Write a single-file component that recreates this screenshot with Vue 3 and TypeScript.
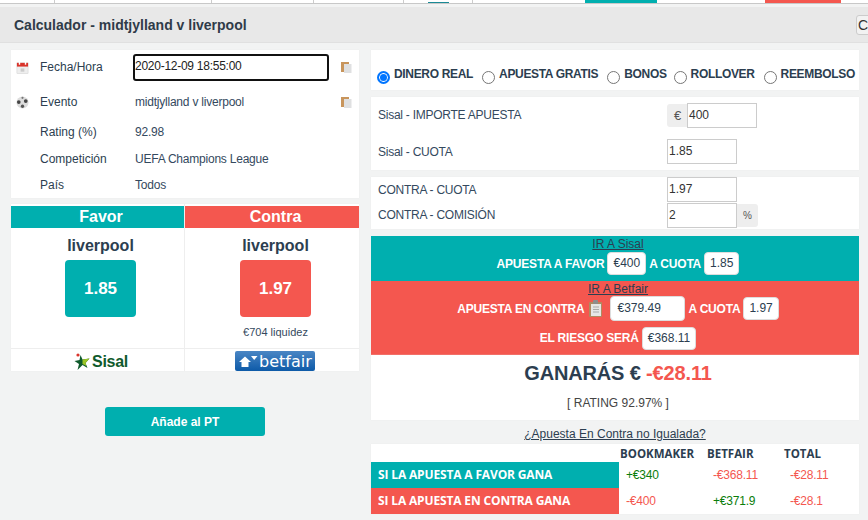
<script setup lang="ts">
const stripCells = [
  { w: 55, cls: 'tick' }, { w: 157, cls: 'tick' }, { w: 102, cls: 'tick' }, { w: 90, cls: 'tick' },
  { w: 24, cls: '' }, { w: 21, cls: 'dark' }, { w: 24, cls: 'tick' }, { w: 112, cls: '' },
  { w: 72, cls: 'teal' }, { w: 108, cls: '' }, { w: 76, cls: 'red' }
]
const infoRows = [
  { label: 'Rating (%)', value: '92.98' },
  { label: 'Competición', value: 'UEFA Champions League' },
  { label: 'País', value: 'Todos' }
]
const modes = ['DINERO REAL', 'APUESTA GRATIS', 'BONOS', 'ROLLOVER', 'REEMBOLSO']
</script>

<template>
  <div class="page">
    <div class="strip">
      <span class="cell" v-for="(c, i) in stripCells" :key="i" :class="c.cls" :style="{ width: c.w + 'px' }"></span>
    </div>
    <header class="head">
      <h1>Calculador - midtjylland v liverpool</h1>
      <button class="closeb">C</button>
    </header>
    <div class="cols">
      <div class="left">
        <section class="card info">
          <div class="irow r1">
            <svg class="ic" viewBox="0 0 14 14"><rect x="1" y="2" width="12" height="11.5" fill="#eee" stroke="#ccc" stroke-width=".5"/><rect x="1" y="2" width="12" height="4" fill="#d9342b"/><rect x="3" y="1" width="1.5" height="3" fill="#fff"/><rect x="9.5" y="1" width="1.5" height="3" fill="#fff"/><rect x="5" y="8" width="4" height="3.5" fill="#ccc"/></svg>
            <span class="lab">Fecha/Hora</span>
            <span class="datebox">2020-12-09 18:55:00</span>
            <svg class="cp" viewBox="0 0 11 11"><rect x="0" y="0" width="8" height="10" fill="#c8955c"/><rect x="3" y="2" width="7.5" height="9" fill="#dfe0e1"/></svg>
          </div>
          <div class="irow r2">
            <svg class="ic" viewBox="0 0 14 14"><circle cx="7" cy="7" r="6.5" fill="#dcdcdc"/><circle cx="3" cy="6.5" r="2" fill="#444"/><circle cx="10.5" cy="5.5" r="2" fill="#444"/><circle cx="7" cy="11" r="1.8" fill="#555"/><circle cx="7" cy="2" r="1.2" fill="#777"/></svg>
            <span class="lab">Evento</span>
            <span class="val ev">midtjylland v liverpool</span>
            <svg class="cp" viewBox="0 0 11 11"><rect x="0" y="0" width="8" height="10" fill="#c8955c"/><rect x="3" y="2" width="7.5" height="9" fill="#dfe0e1"/></svg>
          </div>
          <div class="irow plain" v-for="r in infoRows" :key="r.label">
            <span class="ic-sp"></span>
            <span class="lab">{{ r.label }}</span>
            <span class="val">{{ r.value }}</span>
          </div>
        </section>

        <section class="card sides">
          <div class="side sfav">
            <div class="side-h teal">Favor</div>
            <div class="side-b">
              <div class="team">liverpool</div>
              <div class="oddbox teal">1.85</div>
            </div>
            <div class="logo">
              <svg width="18" height="18" viewBox="0 0 17 18"><circle cx="3.5" cy="2" r="1.6" fill="#d9342b"/><path d="M6 2 L8 6.5 L15 5.5 L11 10 L13 15 L8 12 L3 17 L4.5 11 L0 8 L5 7 Z" fill="#0f5a2c"/><path d="M8 6.5 L15 5.5 L11 10 L12 13 L8 11 Z" fill="#9cc526"/></svg>
              <span class="sisal">Sisal</span>
            </div>
          </div>
          <div class="side scon">
            <div class="side-h red">Contra</div>
            <div class="side-b">
              <div class="team">liverpool</div>
              <div class="oddbox red">1.97</div>
              <div class="liq">€704 liquidez</div>
            </div>
            <div class="logo">
              <div class="betfair">
                <svg width="19" height="11" viewBox="0 0 19 11"><path d="M0 6 L6 .5 L12 6 H9.5 V11 H2.5 V6 Z M12 0 H18.5 L15.2 4 Z" fill="#fff"/></svg>
                <span>betfair</span>
              </div>
            </div>
          </div>
        </section>

        <div class="addwrap"><button class="add">Añade al PT</button></div>
      </div>

      <div class="right">
        <section class="card modes">
          <label class="mode" v-for="(m, i) in modes" :key="m">
            <span class="radio" :class="{ on: i === 0 }"></span>
            <span class="mtext">{{ m }}</span>
          </label>
        </section>

        <section class="card form f1">
          <div class="frow">
            <span class="flab up">Sisal - IMPORTE APUESTA</span>
            <span class="addon">€</span><span class="inp">400</span>
          </div>
          <div class="frow second">
            <span class="flab">Sisal - CUOTA</span>
            <span class="inp">1.85</span>
          </div>
        </section>

        <section class="card form f2">
          <div class="frow">
            <span class="flab">CONTRA - CUOTA</span>
            <span class="inp">1.97</span>
          </div>
          <div class="frow">
            <span class="flab up">CONTRA - COMISIÓN</span>
            <span class="inp">2</span><span class="addon pct">%</span>
          </div>
        </section>

        <section class="band teal b1">
          <a class="golink">IR A Sisal</a>
          <div class="bline">
            <b>APUESTA A FAVOR</b><span class="chip">€400</span><b>A CUOTA</b><span class="chip">1.85</span>
          </div>
        </section>
        <section class="band red b2">
          <a class="golink">IR A Betfair</a>
          <div class="bline">
            <b>APUESTA EN CONTRA</b>
            <svg class="clip" viewBox="0 0 14 17"><rect x="0" y="2" width="13" height="15" rx="1" fill="#b08a60"/><rect x="2" y="4" width="10" height="12" fill="#e6e6e6"/><rect x="4" y="0" width="5" height="4" rx="1" fill="#8d8d8d"/><path d="M4 7h6M4 9.5h6M4 12h6" stroke="#aaa"/></svg>
            <span class="chip wide">€379.49</span><b>A CUOTA</b><span class="chip">1.97</span>
          </div>
          <div class="bline l3">
            <b>EL RIESGO SERÁ</b><span class="chip">€368.11</span>
          </div>
        </section>

        <section class="result">
          <div class="gain">GANARÁS € <span class="neg">-€28.11</span></div>
          <div class="rating">[ RATING 92.97% ]</div>
        </section>

        <a class="unmatched">¿Apuesta En Contra no Igualada?</a>

        <section class="card tbl">
          <div class="thead">
            <span class="c0"></span><span class="c1">BOOKMAKER</span><span class="c2">BETFAIR</span><span class="c3">TOTAL</span>
          </div>
          <div class="trow">
            <span class="c0 teal">SI LA APUESTA A FAVOR GANA</span>
            <span class="c1 pos">+€340</span><span class="c2 neg">-€368.11</span><span class="c3 neg">-€28.11</span>
          </div>
          <div class="trow">
            <span class="c0 red">SI LA APUESTA EN CONTRA GANA</span>
            <span class="c1 neg">-€400</span><span class="c2 pos">+€371.9</span><span class="c3 neg">-€28.1</span>
          </div>
        </section>
      </div>
    </div>
  </div>
</template>

<style>
html, body { margin: 0; overflow: hidden; background: #f2f3f3; }
</style>

<style scoped>
.page { width: 868px; height: 520px; overflow: hidden; background: #f2f3f3; font-family: "Liberation Sans", Arial, sans-serif; color: #2c3e50; font-size: 12px; }
.strip { height: 3px; background: #fff; border-bottom: 1px solid #c8c8c8; display: flex; margin-bottom: 3px; }
.cell { height: 3px; box-sizing: border-box; flex: none; }
.cell.tick { border-right: 1px solid #ccc; }
.cell.dark { background: linear-gradient(transparent 2px, #1a8a96 2px); }
.head { height: 35px; background: #e8e8e8; border-bottom: 1px solid #e0e0e0; display: flex; align-items: center; justify-content: space-between; padding-left: 14px; overflow: hidden; }
.head h1 { margin: 0; font-size: 14px; font-weight: 700; color: #2f3b48; }
.closeb { width: 24px; height: 20px; margin-right: -12px; border: 1px solid #ccc; border-radius: 3px; background: #f2f2f2; font: 14px "Liberation Sans", sans-serif; color: #333; padding: 0 0 0 1px; text-align: left; flex: none; }
.cols { display: flex; padding: 7px 0 0 11px; gap: 12px; }
.left { width: 348px; flex: none; }
.right { width: 488px; flex: none; }
.card { background: #fff; box-shadow: 0 0 1px #e6e6e6; }
.info { height: 148px; padding-top: 4px; box-sizing: border-box; margin-bottom: 6px; }
.irow { display: flex; align-items: center; }
.r1 { height: 27px; }
.r2 { height: 27px; margin-top: 8px; }
.plain { height: 26px; }
.plain:nth-child(3) { margin-top: 3px; }
.plain:nth-child(4) { margin-top: 1px; }
.ic { width: 13px; height: 13px; margin-left: 5px; flex: none; }
.ic-sp { width: 18px; flex: none; }
.lab { width: 95px; margin-left: 11px; flex: none; color: #2c3e50; }
.r1 .lab, .r2 .lab, .r2 .val { padding-bottom: 2px; }
.val { color: #34495e; letter-spacing: -.22px; }
.ev { width: 206px; flex: none; }
.datebox { width: 196px; height: 27px; box-sizing: border-box; margin-left: -2px; border: 2px solid #111; border-radius: 3px; line-height: 21px; flex: none; color: #222; margin-right: 12px; letter-spacing: -.26px; }
.cp { width: 11px; height: 11px; flex: none; }
.sides { display: flex; height: 167px; }
.side { display: flex; flex-direction: column; width: 174px; box-sizing: border-box; }
.sfav { border-right: 1px solid #eee; }
.side-h { height: 22px; margin-top: 2px; padding-left: 7px; color: #fff; text-align: center; font-size: 16px; font-weight: 700; line-height: 21px; }
.teal { background: #00afaf; }
.red { background: #f4574f; }
.side-b { flex: 1; text-align: center; padding: 7px 0 0 7px; border-top: 1px solid #fff; }
.sfav .side-b { padding-left: 6px; }
.team { font-size: 16px; font-weight: 700; line-height: 20px; color: #2c3e50; }
.oddbox { width: 71px; height: 57px; margin: 4px auto 0; border-radius: 4px; color: #fff; font-size: 17px; font-weight: 700; line-height: 57px; }
.liq { margin-top: 8px; font-size: 11px; line-height: 14px; color: #34495e; }
.logo { height: 23px; box-sizing: border-box; border-top: 1px solid #eee; padding-left: 7px; display: flex; align-items: flex-end; justify-content: center; overflow: hidden; }
.scon .logo { padding-left: 6px; }
.sisal { font-size: 16px; font-weight: 700; color: #0f5a2c; letter-spacing: -.3px; line-height: 18px; }
.betfair { width: 80px; height: 20px; background: linear-gradient(#4a86c4, #0d5aa8); border-radius: 2px; display: flex; align-items: center; gap: 1px; padding-left: 4px; box-sizing: border-box; color: #fff; font-size: 16px; font-family: "DejaVu Sans", sans-serif; }
.addwrap { text-align: center; padding-top: 36px; }
.add { width: 160px; height: 29px; border: 0; border-radius: 3px; background: #00afaf; color: #fff; font: 700 12px "Liberation Sans", sans-serif; padding: 0; }
.modes { height: 40px; display: flex; align-items: center; margin-bottom: 7px; padding: 10px 0 0 6px; box-sizing: border-box; font-weight: 700; }
.mode { display: flex; align-items: center; gap: 4px; margin-right: 9px; }
.mode:nth-child(3) { margin-right: 7px; }
.mtext { position: relative; top: -1px; color: #2c3e50; letter-spacing: -.33px; white-space: nowrap; }
.radio { width: 13px; height: 13px; border: 1px solid #767676; border-radius: 50%; box-sizing: border-box; background: #fff; position: relative; top: 2px; }
.radio.on { border: 2px solid #0075ff; box-shadow: inset 0 0 0 1px #fff; background: #0075ff; }
.form { padding-left: 7px; box-sizing: border-box; }
.f1 { height: 73px; margin-bottom: 7px; padding-top: 6px; }
.f2 { height: 52px; margin-bottom: 7px; }
.frow { display: flex; align-items: center; height: 25px; }
.f2 .frow + .frow { margin-top: 1px; }
.second { margin-top: 11px; }
.flab { width: 289px; flex: none; color: #34495e; letter-spacing: -.25px; }
.flab.up { padding-bottom: 2px; }
.inp { width: 70px; height: 25px; box-sizing: border-box; border: 1px solid #ccc; line-height: 22px; padding-left: 1px; color: #333; background: #fff; flex: none; }
.addon { height: 23px; line-height: 23px; background: #eee; border-radius: 3px 0 0 3px; color: #555; font-size: 13px; flex: none; width: 20px; text-align: center; }
.f1 .addon { width: 21px; margin-right: -1px; }
.pct { width: 21px; border-radius: 0 3px 3px 0; font-size: 10px; }
.band { text-align: center; color: #fff; box-sizing: border-box; padding-left: 6px; }
.b1 { height: 45px; }
.b2 { height: 74px; }
.golink { display: block; color: #2c3e50; text-decoration: underline; font-size: 12px; line-height: 14px; padding-top: 1px; }
.bline { display: flex; justify-content: center; align-items: center; gap: 3px; font-size: 12px; height: 25px; }
.bline b { font-weight: 700; letter-spacing: -.2px; }
.l3 { height: 24px; margin-top: 5px; }
.chip { background: #fff; color: #2c3e50; border: 1px solid #ddd; border-radius: 4px; height: 23px; line-height: 21px; padding: 0 5px; box-sizing: border-box; display: inline-block; }
.chip.wide { width: 75px; text-align: left; height: 25px; line-height: 23px; margin-left: 4px; padding-left: 6px; }
.clip { width: 14px; height: 17px; margin-left: 2px; }
.result { background: #fff; height: 65px; text-align: center; box-shadow: 0 0 1px #e6e6e6; padding-left: 6px; box-sizing: border-box; }
.gain { font-size: 20px; font-weight: 700; color: #2c3e50; line-height: 33px; padding-top: 2px; letter-spacing: -.15px; }
.neg { color: #f4574f; }
.pos { color: #0a7d0a; }
.rating { margin-top: 6px; line-height: 14px; color: #444; }
.unmatched { display: block; text-align: center; text-decoration: underline; line-height: 16px; padding-top: 6px; height: 24px; box-sizing: border-box; color: #2c3e50; }
.tbl { height: 70px; }
.thead { display: flex; height: 18px; font-family: "Open Sans", sans-serif; font-weight: 700; font-size: 11.5px; align-items: center; }
.trow { display: flex; height: 26px; align-items: center; letter-spacing: -.2px; }
.c0 { width: 248px; flex: none; }
.trow .c0 { height: 26px; line-height: 26px; color: #fff; font-family: "Open Sans", sans-serif; font-weight: 700; font-size: 12px; padding-left: 7px; box-sizing: border-box; white-space: nowrap; letter-spacing: -.15px; }
.c1 { width: 87px; flex: none; }
.c2 { width: 77px; flex: none; }
.c3 { flex: 1; }
.thead .c1 { padding-left: 1px; width: 86px; }
.thead .c2 { padding-left: 1px; width: 76px; }
.thead .c3 { padding-left: 1px; }
.trow .c1 { padding-left: 7px; box-sizing: border-box; }
.trow .c2 { padding-left: 7px; box-sizing: border-box; }
.trow .c3 { padding-left: 7px; }
</style>
